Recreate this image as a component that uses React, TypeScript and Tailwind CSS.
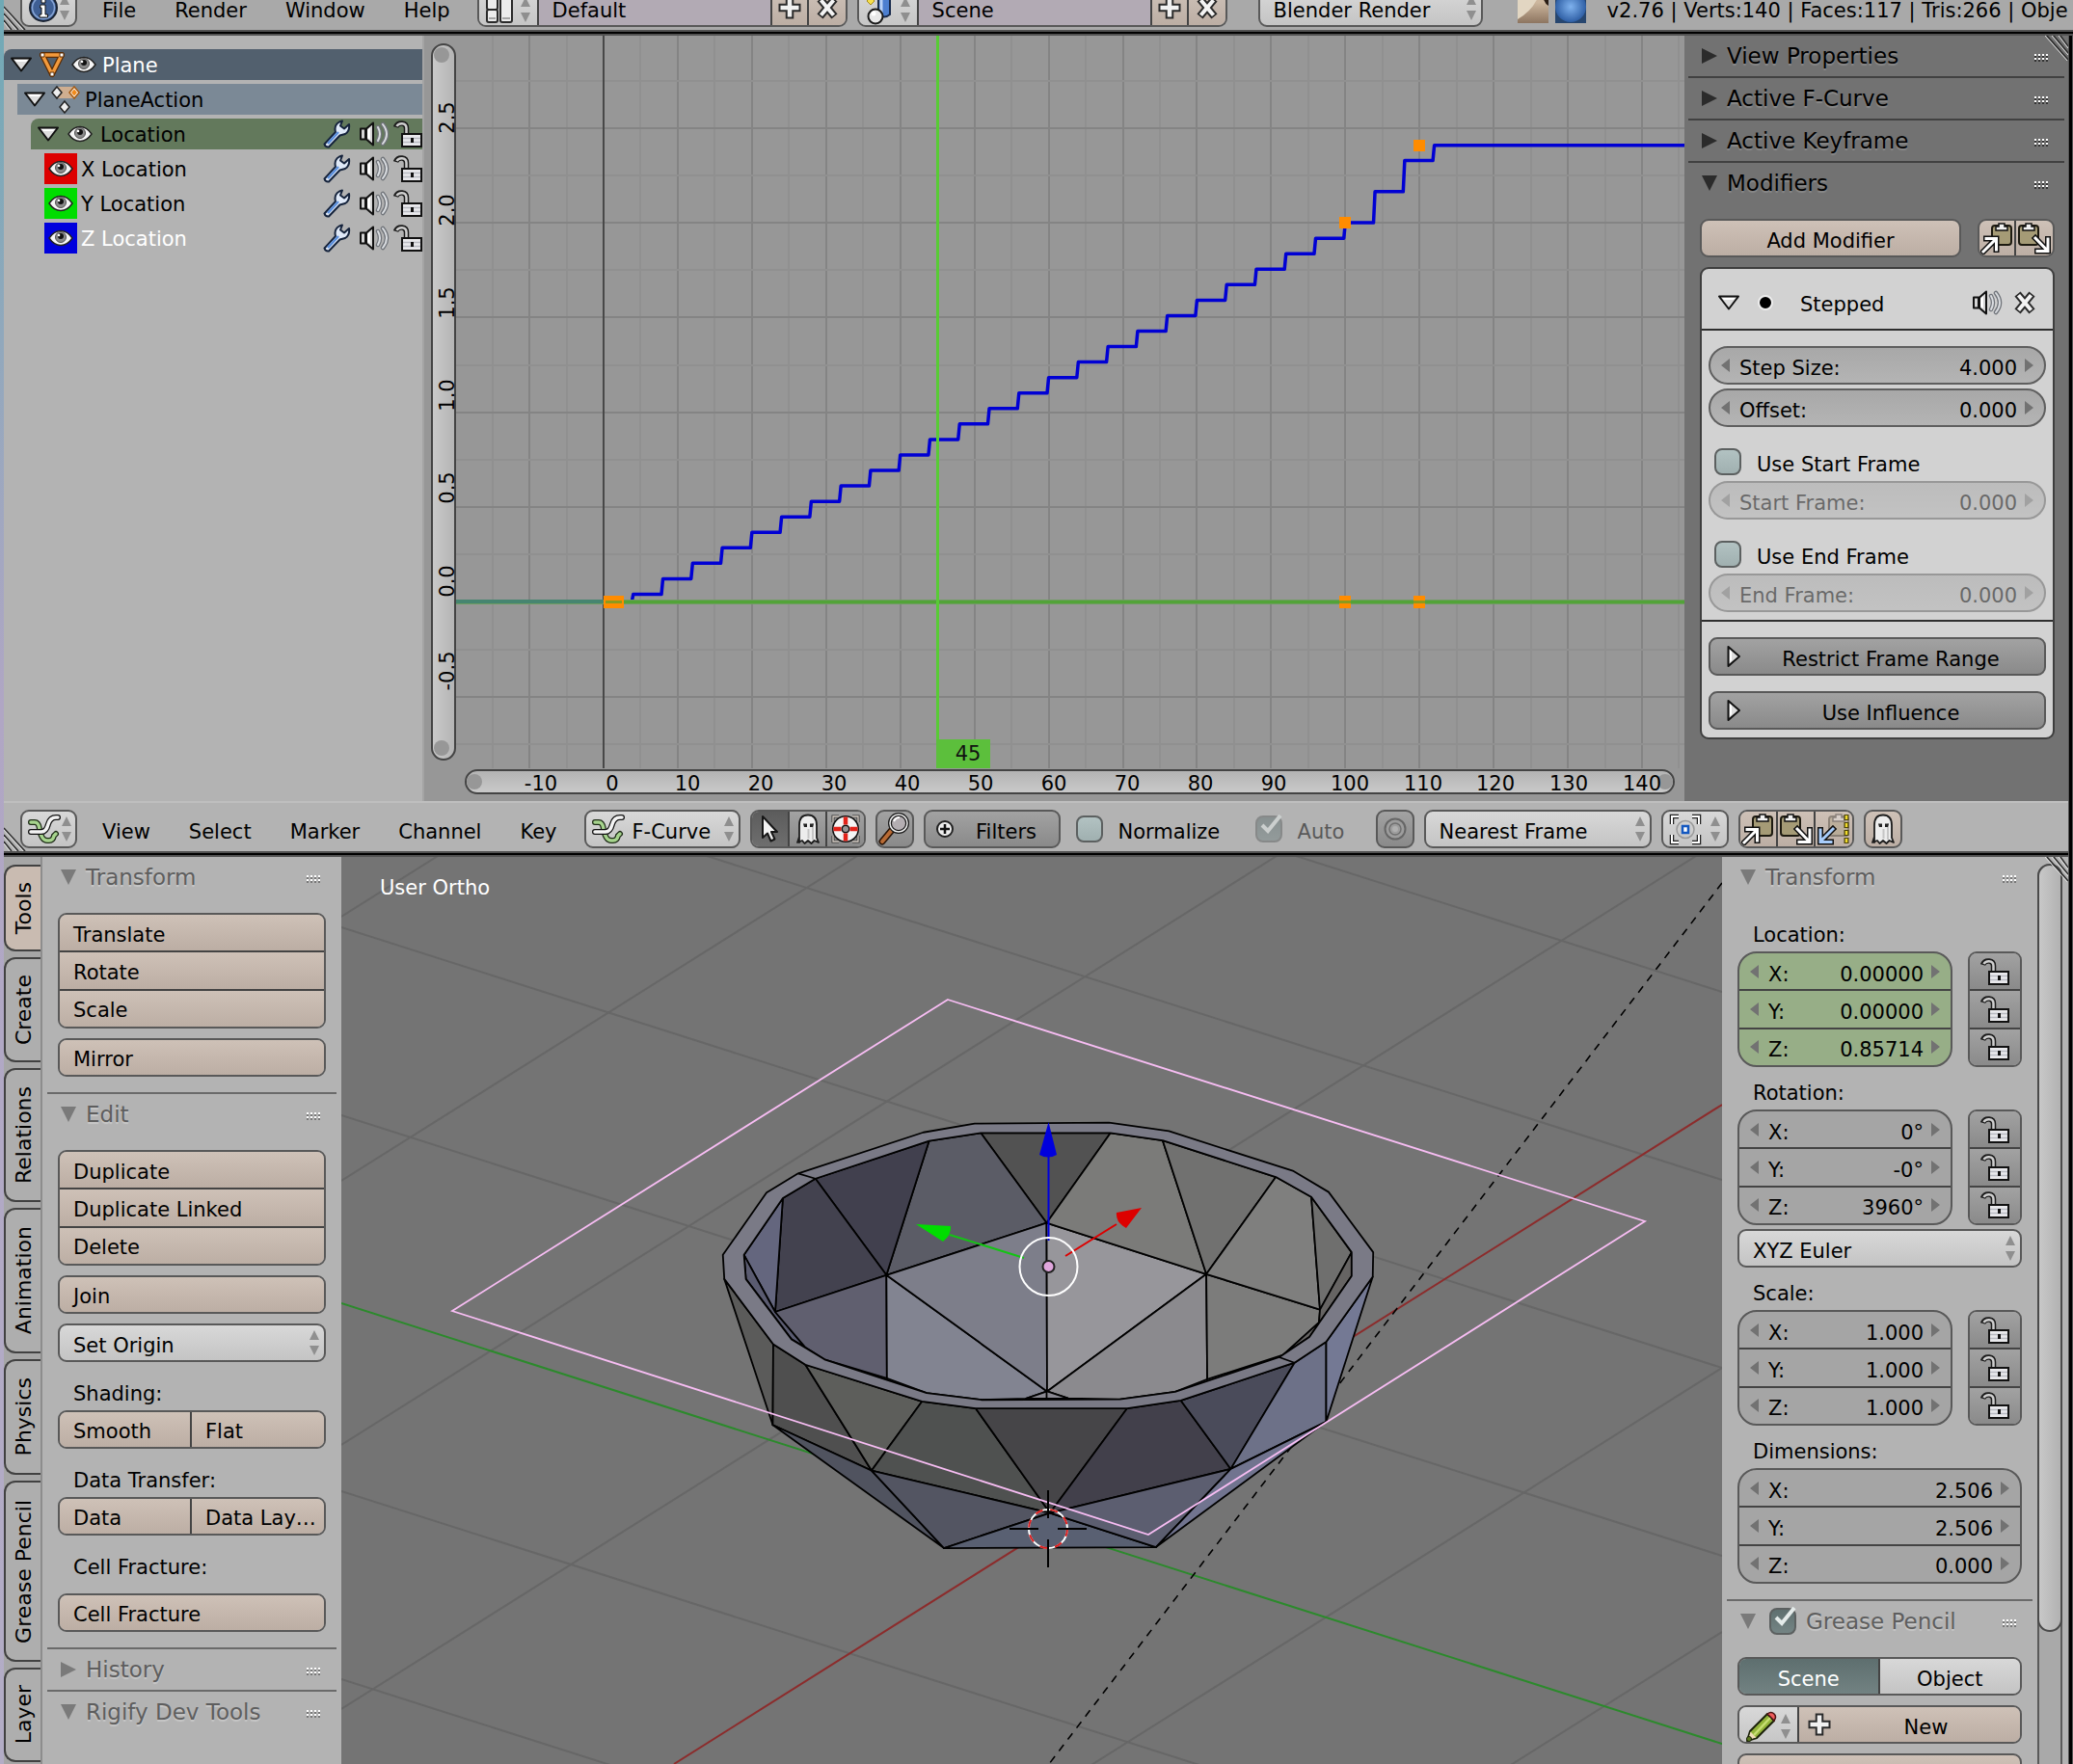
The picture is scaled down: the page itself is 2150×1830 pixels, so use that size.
import type { ReactNode } from "react";
import clsx from "clsx";

const TOOL = "bg-linear-to-b from-[#cec1b7] to-[#bcaea4]";
const MENU = "bg-linear-to-b from-[#d8d8d8] to-[#c4c4c4]";
const DARK = "bg-linear-to-b from-[#a2a2a2] to-[#8a8a8a]";
const FRAME = "rounded-[9px] border-2 border-[#595959]";

/* ---------- icons ---------- */

function Svg({ w = 32, h = 32, children }: { w?: number; h?: number; children: ReactNode }) {
  return (
    <svg width={w} height={h} viewBox={`0 0 ${w} ${h}`} className="shrink-0" aria-hidden="true">
      {children}
    </svg>
  );
}

function UpDown() {
  return (
    <Svg w={12} h={26}>
      <path d="M6 0 11 10H1ZM6 26 11 16H1Z" fill="#8f8f8f" />
    </Svg>
  );
}

function Disclosure() {
  return (
    <Svg w={24} h={18}>
      <path d="M2 2.500H22L12 15.500Z" fill="#ddd" stroke="#111" strokeWidth="2" strokeLinejoin="round" />
      <path d="M5 4H19L17 6H7Z" fill="#fff" />
    </Svg>
  );
}

function DisclosureRight() {
  return (
    <Svg w={16} h={24}>
      <path d="M2.500 2V22L14 12Z" fill="#ddd" stroke="#111" strokeWidth="2" strokeLinejoin="round" />
      <path d="M4 5V18L6 16V7Z" fill="#fff" />
    </Svg>
  );
}

function Eye() {
  return (
    <Svg w={26} h={18}>
      <path d="M1 9Q6 1.500 13 1.500T25 9Q20 16.500 13 16.500T1 9Z" fill="#f6f6f6" stroke="#222" strokeWidth="1.500" />
      <circle cx="13" cy="8" r="5.500" fill="#8a8a8a" stroke="#555" />
      <circle cx="13" cy="7" r="3" fill="#111" />
      <circle cx="11" cy="6" r="1.300" fill="#fff" />
    </Svg>
  );
}

function MeshTriangle() {
  return (
    <Svg w={28} h={28}>
      <path d="M4 4H24L14 24Z" fill="none" stroke="#5a2c05" strokeWidth="6" strokeLinejoin="round" />
      <path d="M4 4H24L14 24Z" fill="none" stroke="#f39a3c" strokeWidth="3.500" strokeLinejoin="round" />
      <path d="M2 2h4v4H2zM22 2h4v4h-4zM12 22h4v4h-4z" fill="#fff" stroke="#5a2c05" />
    </Svg>
  );
}

function ActionIcon() {
  return (
    <Svg w={32} h={30}>
      <path d="M7 2H25V14H7Z" fill="#cfae90" />
      <path d="M7 2 12 8 7 14 2 8Z" fill="#eee" stroke="#222" strokeWidth="1.500" />
      <path d="M25 2 30 8 25 14 20 8Z" fill="#fff" stroke="#a65b12" strokeWidth="1.500" />
      <path d="M25 4.500 28 8 25 11.500 22 8Z" fill="#f08a1c" />
      <path d="M15 17 20 23 15 29 10 23Z" fill="#eee" stroke="#222" strokeWidth="1.500" />
    </Svg>
  );
}

function Wrench() {
  return (
    <Svg w={30} h={30}>
      <path
        d="M2.500 25.500 14 13Q12 6 18 2.500L21 1.500 19 6.500 23 9.500 28 5Q29 12 24 15L18.500 16.500 7 28.500Q3.500 29 2.500 25.500Z"
        fill="#dfe9f8"
        stroke="#15233c"
        strokeWidth="2"
        strokeLinejoin="round"
      />
      <path d="M6 25 17 13" stroke="#5b8fdc" strokeWidth="2.500" />
    </Svg>
  );
}

function Speaker() {
  return (
    <Svg w={32} h={26}>
      <path d="M2 7.500H7V18.500H2ZM8 7.500 15 1.500V24.500L8 18.500Z" fill="#d5d5d5" stroke="#111" strokeWidth="2" strokeLinejoin="round" />
      <path d="M9 9 12 6V19L9 17Z" fill="#fff" />
      <path d="M20 6Q24 13 20 20M25 3Q33 13 25 23" fill="none" stroke="#70747a" strokeWidth="4.500" strokeLinecap="round" />
      <path d="M20 6Q24 13 20 20M25 3Q33 13 25 23" fill="none" stroke="#d9dce0" strokeWidth="2" strokeLinecap="round" />
    </Svg>
  );
}

function Lock() {
  return (
    <Svg w={30} h={28}>
      <path d="M2.500 7Q4 2.500 9 3 13.500 3.500 13.500 8V14" fill="none" stroke="#1c1c1c" strokeWidth="5.500" />
      <path d="M3.500 6Q5 3 9 3.200 13.500 3.500 13.500 8V14" fill="none" stroke="#cfcfcf" strokeWidth="2.500" />
      <path d="M9 14H29V27H9Z" fill="#e9e9ec" stroke="#111" strokeWidth="2" />
      <path d="M10 18.500H28M10 22.500H28" stroke="#b9bbc2" strokeWidth="1.500" />
      <path d="M18 18h3v5h-3z" fill="#111" />
    </Svg>
  );
}

function Cross() {
  return (
    <Svg w={26} h={26}>
      <path d="M5.500 4 20.500 22M20.500 4 5.500 22" stroke="#2a2a2a" strokeWidth="8" />
      <path d="M6.500 5.200 19.500 20.800M19.500 5.200 6.500 20.800" stroke="#f4f4f4" strokeWidth="4" />
    </Svg>
  );
}

function Plus() {
  return (
    <Svg w={26} h={26}>
      <path d="M13 1.500V24.500M1.500 13H24.500" stroke="#2a2a2a" strokeWidth="8.500" />
      <path d="M13 3.500V22.500M3.500 13H22.500" stroke="#f1f1f1" strokeWidth="4.500" />
    </Svg>
  );
}

function InfoIcon() {
  return (
    <Svg w={32} h={34}>
      <circle cx="16" cy="17" r="14" fill="#3f5f94" stroke="#1b2433" strokeWidth="2" />
      <circle cx="16" cy="17" r="11.500" fill="none" stroke="#88a6d6" strokeWidth="1.500" />
      <path d="M13 14H18V24H20.500V27H12V24H14V17H12.500ZM14 8H18V12H14Z" fill="#fff" stroke="#111" strokeWidth="1" />
    </Svg>
  );
}

function CurveIcon() {
  return (
    <Svg w={34} h={34}>
      <g fill="none" strokeLinecap="round">
        <path d="M3 10H7Q11 10 12 17 14 29 20 29H22Q26 29 27 24L29 22" stroke="#1d2b16" strokeWidth="6" />
        <path d="M3 10H7Q11 10 12 17 14 29 20 29H22Q26 29 27 24L29 22" stroke="#a6d48d" strokeWidth="3.500" />
        <path d="M3 20H14Q19 20 21 12 23 5 29 5H31" stroke="#111" strokeWidth="6" />
        <path d="M3 20H14Q19 20 21 12 23 5 29 5H31" stroke="#f4f4f4" strokeWidth="3.500" />
      </g>
    </Svg>
  );
}

function ScreenLayout() {
  return (
    <Svg w={30} h={30}>
      <g fill="#ececec" stroke="#2a2a2a" strokeWidth="2">
        <rect x="2" y="1" width="11" height="14" rx="2" />
        <rect x="2" y="15" width="11" height="13" rx="2" />
        <rect x="16" y="1" width="12" height="27" rx="2" />
      </g>
      <path d="M4 24H11M18 24H26" stroke="#a5a5a5" strokeWidth="2" />
    </Svg>
  );
}

function SceneIcon() {
  return (
    <Svg w={32} h={34}>
      <path d="M2 8 6 4 10 8 6 12Z" fill="#f5df4d" stroke="#a58a1c" />
      <path d="M14 2H26V22Q20 27 14 22Z" fill="#4c7fd0" stroke="#182a4c" strokeWidth="2" />
      <path d="M17 4V21" stroke="#b9d2f6" strokeWidth="3" />
      <circle cx="11" cy="24" r="7.500" fill="#e8e8e8" stroke="#1a1a1a" strokeWidth="2" />
      <circle cx="9" cy="21" r="2.500" fill="#fff" />
    </Svg>
  );
}

function Pointer() {
  return (
    <Svg w={22} h={32}>
      <path
        d="M4 3V25L9 20.500 12.500 28.500 16.500 26.500 13 19H19Z"
        fill="#f2f2f2"
        stroke="#161616"
        strokeWidth="2"
        strokeLinejoin="round"
      />
    </Svg>
  );
}

function Ghost() {
  return (
    <Svg w={26} h={32}>
      <path
        d="M4 30V12Q4 1.500 13 1.500T22 12V25L24 30 19.500 28 16.500 31 13 28 9.500 31 7 28 2 30 4 24Z"
        fill="#ededed"
        stroke="#1c1c1c"
        strokeWidth="1.800"
        strokeLinejoin="round"
      />
      <path d="M18 10V27M13.500 16V26" stroke="#c6c6c6" strokeWidth="2" />
      <path d="M8 10.500H12V14H9ZM15 10.500H19L18 14H15Z" fill="#222" />
    </Svg>
  );
}

function Lifebuoy() {
  return (
    <Svg w={32} h={32}>
      <path d="M3 9V3H9M23 3H29V9M29 23V29H23M9 29H3V23" fill="none" stroke="#333" strokeWidth="3" />
      <path d="M3 9V3H9M23 3H29V9M29 23V29H23M9 29H3V23" fill="none" stroke="#d8d0c8" strokeWidth="1.300" />
      <circle cx="16" cy="16" r="8.500" fill="none" stroke="#111" strokeWidth="11" />
      <circle cx="16" cy="16" r="8.500" fill="none" stroke="#f4f4f4" strokeWidth="8" />
      <path d="M16 3.500V11.500M16 20.500V28.500M3.500 16H11.500M20.500 16H28.500" stroke="#e2231a" strokeWidth="4.500" />
    </Svg>
  );
}

function Magnifier() {
  return (
    <Svg w={34} h={34}>
      <path d="M4 30 14 18" stroke="#2a1507" strokeWidth="7" strokeLinecap="round" />
      <path d="M4 30 14 18" stroke="#b86b35" strokeWidth="4" strokeLinecap="round" />
      <circle cx="21" cy="11" r="9" fill="#b4aeb2" stroke="#1a1a1a" strokeWidth="4" />
      <circle cx="21" cy="11" r="9" fill="none" stroke="#eee" strokeWidth="1.500" />
      <path d="M16 9Q18 5 22 5" stroke="#fff" strokeWidth="2" fill="none" />
    </Svg>
  );
}

function PlusBadge() {
  return (
    <Svg w={20} h={20}>
      <circle cx="10" cy="10" r="8" fill="#eee" stroke="#222" strokeWidth="2" />
      <path d="M10 5V15M5 10H15" stroke="#111" strokeWidth="2.500" />
    </Svg>
  );
}

function PivotIcon() {
  const corner = "M3 11V3H10M24 3H31V11M31 22V30H24M10 30H3V22";
  return (
    <Svg w={34} h={33}>
      <path d={corner} fill="none" stroke="#222" strokeWidth="4.500" />
      <path d={corner} fill="none" stroke="#fff" strokeWidth="2" />
      <circle cx="17" cy="16.500" r="9" fill="none" stroke="#999" strokeWidth="1.500" />
      <rect x="14" y="13" width="6" height="7" fill="#fff" stroke="#1458c0" strokeWidth="2.500" />
    </Svg>
  );
}

function Clipboard({ kind }: { kind: "copy" | "paste" | "bake" }) {
  const x = kind === "paste" ? 0 : 11;
  const arrow =
    kind === "copy" ? "M3 31 15 19M6 17.500H16.500V29" : kind === "paste" ? "M18 17 30 29.500M31 18V30.500H20" : "M16 17 4 29M3 18V30.500H14";
  return (
    <Svg w={34} h={34}>
      <g opacity={kind === "bake" ? 0.35 : 1}>
        <rect x={x + 1} y="4" width="20" height="20" rx="3" fill="#a59b76" stroke="#1d1a10" strokeWidth="2" />
        <path d={`M${x + 5} 9V5H${x + 8}V2H${x + 14}V5H${x + 17}V9Z`} fill="#f1f1f1" stroke="#111" strokeWidth="1.500" />
      </g>
      {kind === "bake" && (
        <>
          <path d="M30 2V33" stroke="#4b4308" strokeWidth="5" strokeDasharray="6 2" />
          <path d="M30 3V33" stroke="#f2dc2c" strokeWidth="2.500" strokeDasharray="4 4" />
        </>
      )}
      <path d={arrow} fill="none" stroke="#111" strokeWidth="6" strokeLinecap="square" />
      <path d={arrow} fill="none" stroke={kind === "bake" ? "#a8cdfb" : "#fff"} strokeWidth="3" strokeLinecap="square" />
    </Svg>
  );
}

function Pencil() {
  return (
    <Svg w={34} h={34}>
      <path d="M2 32 5 22 23 4 30 11 12 29Z" fill="#93b43a" stroke="#1b210a" strokeWidth="2" strokeLinejoin="round" />
      <path d="M3 31 5.500 22.500 11.500 28.500Z" fill="#efdcb8" />
      <path d="M9 26 26 8" stroke="#c7dd73" strokeWidth="2.500" />
      <path d="M23 4Q27 1 30 4T30 11Z" fill="#ee5b5b" stroke="#4d1414" strokeWidth="1.500" />
      <circle cx="4" cy="30" r="2.500" fill="#5b7a1d" stroke="#1b210a" />
    </Svg>
  );
}

function Grip({ dark }: { dark?: boolean }) {
  return (
    <Svg w={15} h={8}>
      {[0, 4, 8, 12].map((x) => (
        <g key={x}>
          <path d={`M${x} 2h2v2h-2zM${x} 6h2v2h-2z`} fill={dark ? "#333" : "#777"} />
          <path d={`M${x} 0h2v2h-2zM${x} 4h2v2h-2z`} fill="#fff" />
        </g>
      ))}
    </Svg>
  );
}

function CornerHatch({ flip }: { flip?: boolean }) {
  return (
    <svg width="24" height="26" className={clsx("absolute", flip ? "right-0 top-0" : "bottom-0 left-0")} aria-hidden="true">
      {[0, 7, 14].map((o) => (
        <g key={o}>
          <path d={flip ? `M${2 + o} 0 24 ${25 - o}` : `M0 ${2 + o} ${22 - o} 26`} stroke="#2e2e2e" strokeWidth="1.500" />
          <path d={flip ? `M${o} 0 24 ${27 - o}` : `M0 ${4 + o} ${20 - o} 26`} stroke="#e2e2e2" strokeWidth="1" />
        </g>
      ))}
    </svg>
  );
}

/* ---------- widgets ---------- */

function IconSelect({ label, icon, className }: { label: string; icon: ReactNode; className?: string }) {
  return (
    <div className={clsx("relative flex h-10 shrink-0 items-center justify-between px-1.5", MENU, className)}>
      {icon}
      <UpDown />
      <select aria-label={label} className="absolute inset-0 opacity-0" />
    </div>
  );
}

function MenuSelect({ label, value, icon, className }: { label: string; value: string; icon?: ReactNode; className?: string }) {
  return (
    <div className={clsx("relative flex h-10 shrink-0 items-center pl-1.5 pr-1", MENU, FRAME, className)}>
      {icon}
      <select aria-label={label} className="h-full w-full min-w-0 appearance-none pl-2 pt-1.5">
        <option>{value}</option>
      </select>
      <UpDown />
    </div>
  );
}

function ToolButton({ children }: { children: ReactNode }) {
  return <button className={clsx("min-h-0 flex-1 whitespace-nowrap pl-3.5 pt-1 text-left", TOOL)}>{children}</button>;
}

function ToolStack({ items }: { items: string[] }) {
  return (
    <div className={clsx("flex flex-col divide-y-2 divide-[#444] overflow-hidden", FRAME, items.length === 3 ? "h-[120px]" : "h-10")}>
      {items.map((item) => (
        <ToolButton key={item}>{item}</ToolButton>
      ))}
    </div>
  );
}

function ToolPair({ label, items }: { label: string; items: string[] }) {
  return (
    <div>
      <Caption>{label}</Caption>
      <div className={clsx("grid h-10 grid-cols-2 divide-x-2 divide-[#444] overflow-hidden", FRAME)}>
        {items.map((item) => (
          <ToolButton key={item}>{item}</ToolButton>
        ))}
      </div>
    </div>
  );
}

function Caption({ children }: { children: ReactNode }) {
  return <div className="flex h-10 items-center pl-4 pt-1.5">{children}</div>;
}

function NumberRow({ name, value }: { name: string; value: string }) {
  return (
    <div className="flex min-h-0 flex-1 items-center px-2.5">
      <button aria-label={`Decrease ${name}`}>
        <Svg w={12} h={14}>
          <path d="M10 0V14L1 7Z" fill="#727272" />
        </Svg>
      </button>
      <label className="flex min-w-0 flex-1 items-center pl-2 pr-1.5 pt-1.5">
        <span className="shrink-0">{name}</span>
        <input defaultValue={value} className="w-full min-w-0 text-right" />
      </label>
      <button aria-label={`Increase ${name}`}>
        <Svg w={12} h={14}>
          <path d="M2 0V14L11 7Z" fill="#727272" />
        </Svg>
      </button>
    </div>
  );
}

function VectorFields({ caption, values, keyed, locks = true }: { caption: string; values: string[]; keyed?: boolean; locks?: boolean }) {
  return (
    <div>
      <Caption>{caption}</Caption>
      <div className="flex gap-4">
        <div
          className={clsx(
            "flex h-[120px] min-w-0 flex-1 flex-col divide-y-2 divide-[#444] overflow-hidden rounded-[20px] border-2 border-[#595959]",
            keyed ? "bg-[#97ae87]" : "bg-[#a5a5a5]",
          )}
        >
          {["X:", "Y:", "Z:"].map((axis, i) => (
            <NumberRow key={axis} name={axis} value={values[i]} />
          ))}
        </div>
        {locks && (
          <div className={clsx("flex h-[120px] w-14 flex-col divide-y-2 divide-[#444] overflow-hidden", FRAME)}>
            {["X", "Y", "Z"].map((axis) => (
              <button key={axis} aria-label={`Lock ${caption} ${axis}`} className={clsx("flex min-h-0 flex-1 items-center justify-center", DARK)}>
                <Lock />
              </button>
            ))}
          </div>
        )}
      </div>
    </div>
  );
}

function SliderField({ name, value, disabled }: { name: string; value: string; disabled?: boolean }) {
  return (
    <div className={clsx("flex h-10 rounded-full border-2 border-[#5f5f5f] bg-linear-to-b from-[#a8a8a8] to-[#b4b4b4]", disabled && "opacity-50")}>
      <NumberRow name={name} value={value} />
    </div>
  );
}

function Check({ label, checked, disabled, bare }: { label: string; checked?: boolean; disabled?: boolean; bare?: boolean }) {
  return (
    <label className={clsx("flex shrink-0 items-center gap-4", disabled && "opacity-50", !bare && "h-10 pl-1.5")}>
      <span className="relative flex">
        <input
          type="checkbox"
          defaultChecked={checked}
          disabled={disabled}
          aria-label={label}
          className="size-7 appearance-none rounded-lg border-2 border-[#5c6060] bg-linear-to-b from-[#b2c2c2] to-[#a0b0b0] checked:from-[#5f7070] checked:to-[#748484]"
        />
        {checked && (
          <svg width="28" height="30" viewBox="0 0 28 30" className="pointer-events-none absolute -top-1 left-0" aria-hidden="true">
            <path d="M7 14 13 20 26 4" fill="none" stroke="#e4ebea" strokeWidth="4" />
          </svg>
        )}
      </span>
      {!bare && <span className="pt-1.5">{label}</span>}
    </label>
  );
}

function PanelHeader({ title, open, dark, first, check }: { title: string; open?: boolean; dark?: boolean; first?: boolean; check?: boolean }) {
  return (
    <div
      className={clsx(
        "flex shrink-0 items-center gap-2.5 pl-3.5 pr-4",
        first ? "h-[42px]" : "h-11 border-t-2",
        dark ? "border-[#414141] text-black" : "border-[#6a6a6a] text-[#5e5e5e]",
      )}
    >
      <Svg w={16} h={16}>
        <path d={open ? "M0 0H16L8 16Z" : "M0 0 16 8 0 16Z"} fill={dark ? "#2b2b2b" : "#7a7a7a"} />
      </Svg>
      {check && (
        <div className="pl-1">
          <Check label={title} checked bare />
        </div>
      )}
      <h2 className={clsx("flex-1 text-[23px] leading-6", dark ? "[text-shadow:0_2px_1px_#8a8a8a]" : "[text-shadow:0_2px_1px_#c8c8c8]")}>{title}</h2>
      <div className="pt-1">
        <Grip dark={dark} />
      </div>
    </div>
  );
}

function HeaderMenus({ items }: { items: string[] }) {
  return (
    <nav className="ml-1.5 flex shrink-0">
      {items.map((item) => (
        <button key={item} className="h-10 px-5 pt-1.5">
          {item}
        </button>
      ))}
    </nav>
  );
}

function DataBlock({ label, value, icon, className }: { label: string; value: string; icon: ReactNode; className: string }) {
  return (
    <div className={clsx("flex h-10 shrink-0 divide-x-2 divide-[#444] overflow-hidden", FRAME, className)}>
      <IconSelect label={label} icon={icon} className="w-[62px]" />
      <input defaultValue={value} aria-label={`${label} name`} className="h-full min-w-0 flex-1 bg-[#b2aab4] pl-3.5 pt-1.5" />
      <button aria-label={`Add ${label}`} className={clsx("flex w-[38px] items-center justify-center", TOOL)}>
        <Plus />
      </button>
      <button aria-label={`Remove ${label}`} className={clsx("flex w-[38px] items-center justify-center", TOOL)}>
        <Cross />
      </button>
    </div>
  );
}

function AreaEdge() {
  return <div className="h-1.5 shrink-0 border-y-2 border-[#525252] bg-black" />;
}

/* ---------- info header ---------- */

function InfoHeader() {
  return (
    <header className="relative flex h-[31px] shrink-0 items-end overflow-hidden whitespace-nowrap bg-[#a9a9a9] pb-[3px] pl-[17px]">
      <CornerHatch />
      <IconSelect label="Editor type" icon={<InfoIcon />} className={clsx("w-[59px]", FRAME)} />
      <HeaderMenus items={["File", "Render", "Window", "Help"]} />
      <DataBlock label="Screen" value="Default" icon={<ScreenLayout />} className="ml-2 w-[384px]" />
      <DataBlock label="Scene" value="Scene" icon={<SceneIcon />} className="ml-2.5 w-[384px]" />
      <MenuSelect label="Render engine" value="Blender Render" className="ml-8 w-[233px]" />
      <svg width="72" height="40" className="ml-9 shrink-0" aria-hidden="true">
        <defs>
          <linearGradient id="splash" x1="0" y1="0" x2="0" y2="1">
            <stop offset="0.4" stopColor="#cdb79e" />
            <stop offset="1" stopColor="#8d7560" />
          </linearGradient>
          <radialGradient id="ball">
            <stop offset="0" stopColor="#7fb2ee" />
            <stop offset="1" stopColor="#2f5fa5" />
          </radialGradient>
        </defs>
        <rect width="32" height="36" fill="url(#splash)" />
        <path d="M0 0H24Q20 20 0 32Z" fill="#e2d6c2" />
        <path d="M26 0H32V18Q25 14 26 0Z" fill="#2a1d15" />
        <rect x="39" width="32" height="36" fill="#27466f" />
        <circle cx="55" cy="19" r="16" fill="url(#ball)" />
      </svg>
      <p className="ml-[21px] flex h-10 shrink-0 items-center pt-1.5">v2.76 | Verts:140 | Faces:117 | Tris:266 | Obje</p>
    </header>
  );
}

/* ---------- graph editor ---------- */

const axisChannels = [
  { name: "X Location", color: "bg-[#dd0000]" },
  { name: "Y Location", color: "bg-[#00dd00]" },
  { name: "Z Location", color: "bg-[#0000dd]", selected: true },
];

function ChannelToggles() {
  return (
    <div className="ml-auto flex items-center gap-1">
      <button aria-label="Modifiers" className="pr-1">
        <Wrench />
      </button>
      <button aria-label="Mute">
        <Speaker />
      </button>
      <button aria-label="Protect">
        <Lock />
      </button>
    </div>
  );
}

function ChannelList() {
  return (
    <div className="flex w-[436px] shrink-0 flex-col gap-1 border-r-2 border-[#a4a4a4] bg-[#b3b3b3] pt-3.5">
      <div className="flex h-8 items-center gap-1.5 rounded-tl-lg bg-[#52606e] pl-1.5 text-white">
        <Disclosure />
        <MeshTriangle />
        <Eye />
        <span className="pt-0.5">Plane</span>
      </div>
      <div className="ml-3.5 flex h-8 items-center gap-1 bg-[#7b8996] pl-1.5">
        <Disclosure />
        <ActionIcon />
        <span className="pt-0.5">PlaneAction</span>
      </div>
      <div className="ml-7 flex h-8 items-center gap-2 rounded-tl-lg bg-[#63795c] pl-1.5">
        <Disclosure />
        <Eye />
        <span className="pt-0.5">Location</span>
        <ChannelToggles />
      </div>
      {axisChannels.map((ch) => (
        <div key={ch.name} className={clsx("ml-[42px] flex h-8 items-center gap-1", ch.selected && "text-white")}>
          <div className={clsx("flex h-8 w-[34px] items-center justify-center", ch.color)}>
            <Eye />
          </div>
          <span className="pt-0.5">{ch.name}</span>
          <ChannelToggles />
        </div>
      ))}
    </div>
  );
}

const fx = (frame: number) => 626 + frame * 7.693;
const fy = (value: number) => 624.5 - value * 196.7;

function steppedPath() {
  let d = `M${fx(2)} ${fy(0)}H${fx(3.8)}`;
  for (let f = 4; f <= 112; f += 4) {
    const v = f <= 100 ? ((f - 2) / 98) * 2 : Math.min(2 + (f - 100) * 0.041, 2.409);
    d += `L${fx(f)} ${fy(v)}H${f === 112 ? 1747 : fx(f + 3.8)}`;
  }
  return d;
}

const frameLabels = [561, 635, 713, 789, 865, 941, 1017, 1093, 1169, 1245, 1321, 1400, 1476, 1551, 1627, 1703];
const valueLabels = [
  ["2.5", 122],
  ["2.0", 218],
  ["1.5", 314],
  ["1.0", 410],
  ["0.5", 506],
  ["0.0", 603],
  ["-0.5", 696],
] as const;

function GraphPlot() {
  const frames = Array.from({ length: 33 }, (_, i) => i * 5 - 15);
  const values = Array.from({ length: 16 }, (_, i) => i * 0.25 - 0.75);
  return (
    <svg viewBox="440 37 1307 794" preserveAspectRatio="xMinYMin slice" className="h-full min-w-0 flex-1 bg-[#979797]" fontSize="21">
      <defs>
        <linearGradient id="vbar">
          <stop offset="0" stopColor="#cacaca" />
          <stop offset="1" stopColor="#b4b4b4" />
        </linearGradient>
        <linearGradient id="hbar" x2="0" y2="1">
          <stop offset="0" stopColor="#b2b2b2" />
          <stop offset="1" stopColor="#cacaca" />
        </linearGradient>
      </defs>
      {frames.map((f) => (
        <path key={f} d={`M${Math.round(fx(f))} 37V797`} stroke={f % 10 ? "#909090" : "#848484"} strokeWidth="2" />
      ))}
      {values.map((v) => (
        <path key={v} d={`M473 ${Math.round(fy(v))}H1747`} stroke={v % 0.5 ? "#909090" : "#848484"} strokeWidth="2" />
      ))}
      <path d="M626 37V797" stroke="#484848" strokeWidth="2" />
      <path d={steppedPath()} fill="none" stroke="#0000d4" strokeWidth="3.500" strokeLinejoin="round" />
      <path d="M473 624.500H1747" stroke="#6f9c62" strokeWidth="5" />
      <path d="M473 624.500H1747" stroke="#52a338" strokeWidth="3" />
      <path d="M473 624H626" stroke="#468570" strokeWidth="4" />
      <path d="M972.500 37V797" stroke="#58cb35" strokeWidth="3" />
      <g fill="#ff8c00">
        <path d="M626 618h21v13h-21z" />
        <path d="M1389 618h12v13h-12zM1466 618h12v13h-12zM1389 225h12v12h-12zM1466 145h12v12h-12z" />
      </g>
      <path d="M628 624.500H645M1389 624.500H1401M1466 624.500H1478" stroke="#8b9a1e" strokeWidth="3" />
      <path d="M971 767H1027V797H971Z" fill="#5cbf3c" />
      <text x="1004" y="789" textAnchor="middle" fill="#111">
        45
      </text>
      <rect x="448" y="46" width="24" height="742" rx="12" fill="url(#vbar)" stroke="#444" strokeWidth="2" />
      <circle cx="458" cy="57" r="8" fill="#979797" />
      <circle cx="458" cy="776" r="8" fill="#979797" />
      <rect x="483" y="799" width="1253" height="24" rx="12" fill="url(#hbar)" stroke="#444" strokeWidth="2" />
      <circle cx="492" cy="811" r="8" fill="#979797" />
      <circle cx="1727" cy="811" r="8" fill="#979797" />
      {valueLabels.map(([label, y]) => (
        <text key={label} transform={`translate(471 ${y}) rotate(-90)`} textAnchor="middle">
          {label}
        </text>
      ))}
      {frameLabels.map((x, i) => (
        <text key={x} x={x} y="820" textAnchor="middle">
          {i * 10 - 10}
        </text>
      ))}
    </svg>
  );
}

function ModifierPanel() {
  return (
    <div className="pl-3 pr-2.5 pt-4">
      <div className="flex gap-[17px]">
        <button className={clsx("h-10 flex-1 pt-1.5", TOOL, FRAME)}>Add Modifier</button>
        <div className={clsx("flex h-10 divide-x-2 divide-[#444] overflow-hidden", FRAME)}>
          <button aria-label="Copy modifiers" className={clsx("flex w-[38px] items-center justify-center", TOOL)}>
            <Clipboard kind="copy" />
          </button>
          <button aria-label="Paste modifiers" className={clsx("flex w-[38px] items-center justify-center", TOOL)}>
            <Clipboard kind="paste" />
          </button>
        </div>
      </div>
      <div className="mt-2.5 rounded-[9px] border-2 border-[#3e3e3e] bg-[#d2d2d2]">
        <div className="flex h-16 items-center border-b-2 border-[#2e2e2e] px-4 pt-2">
          <button aria-label="Collapse modifier">
            <Disclosure />
          </button>
          <input
            type="radio"
            defaultChecked
            aria-label="Active modifier"
            className="ml-[18px] size-4 appearance-none rounded-full border-2 border-[#eee] bg-black"
          />
          <input defaultValue="Stepped" aria-label="Modifier name" className="ml-7 min-w-0 flex-1 pt-1" />
          <button aria-label="Mute modifier">
            <Speaker />
          </button>
          <button aria-label="Delete modifier" className="ml-2.5">
            <Cross />
          </button>
        </div>
        <div className="flex flex-col border-b-2 border-[#2e2e2e] px-[7px] pb-2 pt-4">
          <SliderField name="Step Size:" value="4.000" />
          <div className="mt-1">
            <SliderField name="Offset:" value="0.000" />
          </div>
          <div className="mt-4">
            <Check label="Use Start Frame" />
            <SliderField name="Start Frame:" value="0.000" disabled />
          </div>
          <div className="mt-4">
            <Check label="Use End Frame" />
            <SliderField name="End Frame:" value="0.000" disabled />
          </div>
        </div>
        <div className="flex flex-col gap-4 px-[7px] pb-2 pt-4">
          {["Restrict Frame Range", "Use Influence"].map((item) => (
            <button key={item} className={clsx("flex h-10 items-center pl-4 pr-1", DARK, FRAME)}>
              <DisclosureRight />
              <span className="flex-1 pt-1.5">{item}</span>
            </button>
          ))}
        </div>
      </div>
    </div>
  );
}

function GraphHeader() {
  return (
    <div className="relative flex h-[52px] shrink-0 items-end whitespace-nowrap border-t-2 border-[#bfbfbf] bg-[#b3b3b3] pb-[3px] pl-[17px]">
      <CornerHatch />
      <IconSelect label="Editor type" icon={<CurveIcon />} className={clsx("w-[59px]", FRAME)} />
      <HeaderMenus items={["View", "Select", "Marker", "Channel", "Key"]} />
      <div className="ml-2 flex gap-2.5">
        <MenuSelect label="Mode" value="F-Curve" icon={<CurveIcon />} className="w-[162px]" />
        <div className={clsx("flex h-10 w-[120px] divide-x-2 divide-[#444] overflow-hidden", FRAME)}>
          <button aria-label="Only selected" className="flex flex-1 items-center justify-center bg-linear-to-b from-[#5c5c5c] to-[#6e6e6e]">
            <Pointer />
          </button>
          <button aria-label="Show hidden" className={clsx("flex flex-1 items-center justify-center", DARK)}>
            <Ghost />
          </button>
          <button aria-label="Show errors" className={clsx("flex flex-1 items-center justify-center", DARK)}>
            <Lifebuoy />
          </button>
        </div>
        <button aria-label="Search" className={clsx("flex h-10 w-10 items-center justify-center", DARK, FRAME)}>
          <Magnifier />
        </button>
        <button className={clsx("flex h-10 w-[142px] items-center pl-2.5", DARK, FRAME)}>
          <PlusBadge />
          <span className="flex-1 pt-1.5">Filters</span>
        </button>
        <div className="w-[182px]">
          <Check label="Normalize" />
        </div>
        <div className="w-[121px] -ml-1.5">
          <Check label="Auto" checked disabled />
        </div>
        <button aria-label="Proportional editing" className={clsx("flex h-10 w-10 items-center justify-center", DARK, FRAME)}>
          <Svg w={26} h={26}>
            <circle cx="13" cy="13" r="10.500" fill="#9d9d9d" stroke="#666" strokeWidth="2" />
            <circle cx="13" cy="13" r="6" fill="none" stroke="#707070" strokeWidth="1.500" />
            <circle cx="13" cy="13" r="3" fill="#b0b0b0" />
          </Svg>
        </button>
        <MenuSelect label="Auto snap" value="Nearest Frame" className="w-[236px]" />
        <IconSelect label="Pivot" icon={<PivotIcon />} className={clsx("w-[70px]", FRAME)} />
        <div className={clsx("flex h-10 w-[120px] divide-x-2 divide-[#444] overflow-hidden", FRAME)}>
          {(["copy", "paste", "bake"] as const).map((kind) => (
            <button key={kind} aria-label={`${kind} keyframes`} className={clsx("flex flex-1 items-center justify-center", TOOL)}>
              <Clipboard kind={kind} />
            </button>
          ))}
        </div>
        <button aria-label="Ghost curves" className={clsx("flex h-10 w-10 items-center justify-center", TOOL, FRAME)}>
          <Ghost />
        </button>
      </div>
    </div>
  );
}

/* ---------- 3d view ---------- */

const toolTabs = [
  { name: "Tools", height: "h-[90px]", active: true },
  { name: "Create", height: "h-[109px]" },
  { name: "Relations", height: "h-[139px]" },
  { name: "Animation", height: "h-[151px]" },
  { name: "Physics", height: "h-[120px]" },
  { name: "Grease Pencil", height: "h-[188px]" },
  { name: "Layer", height: "h-[98px]" },
];

function ToolShelf() {
  return (
    <>
      <div className="flex w-10 shrink-0 flex-col gap-1.5 border-r-2 border-[#8d8d8d] bg-[#a6a6a6] pt-2">
        {toolTabs.map((tab) => (
          <button
            key={tab.name}
            className={clsx(
              "flex shrink-0 items-center justify-center rounded-l-[12px] border-2 border-r-0 border-[#414141] pl-0.5 text-[22px] leading-6",
              tab.height,
              tab.active ? "bg-[#c9bbb1]" : "bg-[#aeaeae]",
            )}
          >
            <span className="rotate-180 [writing-mode:vertical-rl]">{tab.name}</span>
          </button>
        ))}
      </div>
      <div className="flex w-[310px] shrink-0 flex-col bg-[#b3b3b3] px-[5px]">
        <PanelHeader title="Transform" open first />
        <div className="flex flex-col gap-2.5 px-[11px] py-4">
          <ToolStack items={["Translate", "Rotate", "Scale"]} />
          <ToolStack items={["Mirror"]} />
        </div>
        <PanelHeader title="Edit" open />
        <div className="flex flex-col gap-2.5 px-[11px] py-4">
          <ToolStack items={["Duplicate", "Duplicate Linked", "Delete"]} />
          <ToolStack items={["Join"]} />
          <MenuSelect label="Origin" value="Set Origin" />
          <ToolPair label="Shading:" items={["Smooth", "Flat"]} />
          <ToolPair label="Data Transfer:" items={["Data", "Data Lay…"]} />
          <Caption>Cell Fracture:</Caption>
          <ToolStack items={["Cell Fracture"]} />
        </div>
        <PanelHeader title="History" />
        <PanelHeader title="Rigify Dev Tools" open />
      </div>
    </>
  );
}

const innerFaces = [
  ["638,164 908,164 775,440", "#525252"],
  ["530,188 638,164 775,440 441,600", "#5b5c66"],
  ["293,304 530,188 441,600", "#41404e"],
  ["225,364 293,304 441,600 209,713", "#43424f"],
  ["144,538 225,364 209,713", "#64667e"],
  ["144,538 209,713 272,822 243,797 148,612", "#5a5b70"],
  ["209,713 441,600 442,917 312,859 272,822", "#605f6f"],
  ["441,600 776,957 732,979 640,983 525,962 442,917", "#828491"],
  ["441,600 775,440 776,957", "#7d7e8a"],
  ["775,440 1108,597 776,957", "#97969b"],
  ["776,957 1108,597 1110,920 1043,958 928,981 820,978", "#8b8a8e"],
  ["776,957 820,978 732,979", "#8a8992"],
  ["1108,597 1345,706 1343,745 1268,845 1110,920", "#7c7c7b"],
  ["775,440 908,164 1017,187 1108,597", "#7b7b79"],
  ["1017,187 1253,299 1108,597", "#717170"],
  ["1253,299 1327,360 1345,706 1108,597", "#7f7f7e"],
  ["1327,360 1411,530 1345,706", "#6f6f6e"],
  ["1411,530 1411,603 1323,790 1268,845 1343,745 1345,706", "#666463"],
];

const outerFaces = [
  ["103,612 205,812 204,1060", "#5b5b5a"],
  ["205,812 272,875 410,1200 204,1060", "#4f4f4f"],
  ["272,875 515,988 410,1200", "#5d5e5b"],
  ["515,988 627,1009 782,1330 410,1200", "#4f5150"],
  ["627,1009 943,1009 782,1330", "#464548"],
  ["943,1009 1055,985 1159,1195 782,1330", "#42404b"],
  ["1055,985 1292,869 1159,1195", "#4a4b5a"],
  ["1292,869 1358,805 1358,1050 1159,1195", "#6d7188"],
  ["1358,805 1455,605 1358,1050", "#747994"],
  ["204,1060 410,1200 561,1438", "#50535f"],
  ["410,1200 782,1330 561,1438", "#535562"],
  ["561,1438 782,1330 1003,1435", "#596072"],
  ["782,1330 1159,1195 1003,1435", "#5c5e70"],
  ["1159,1195 1358,1050 1003,1435", "#71748f"],
];

const rim =
  "M625 135 905 132 1030 158 1290 281 1363 345 1456 530 1455 605 1358 805 1292 869 1055 985 943 1009 627 1009 515 988 272 875 205 812 103 612 100 538 191 347 257 288 518 162Z" +
  "M638 164 908 164 1017 187 1253 299 1327 360 1411 530 1411 603 1323 790 1260 852 1043 958 928 981 640 983 525 962 312 859 243 797 148 612 144 538 225 364 293 304 530 188Z";

function Viewport() {
  return (
    <svg viewBox="354 889 1432 941" preserveAspectRatio="xMinYMin slice" className="h-full min-w-0 flex-1 bg-[#747474]" fontSize="21">
      <g stroke="#676767" strokeWidth="2">
        {[572, 767, 962, 1157, 1547, 1742].map((y) => (
          <path key={y} d={`M354 ${y} 1786 ${y + 457}`} />
        ))}
        {[951, 1225, 1499, 1773, 2321, 2595].map((y) => (
          <path key={y} d={`M354 ${y} 1786 ${y - 902}`} />
        ))}
      </g>
      <path d="M354 1352 1786 1809" stroke="#2c8a2c" strokeWidth="2" />
      <path d="M699 1830 1786 1146" stroke="#8c2c2c" strokeWidth="2" />
      <path d="M1786 916 1088 1830" stroke="#000" strokeWidth="1.600" strokeDasharray="8 7" />
      <g transform="translate(700 1120) scale(.4974 .338)" stroke="#000" strokeWidth="1.800" strokeLinejoin="round">
        {[...innerFaces, ...outerFaces].map(([points, fill]) => (
          <polygon key={points} points={points} fill={fill} vectorEffect="non-scaling-stroke" />
        ))}
        <path d={rim} fill="#7a7a86" fillRule="evenodd" vectorEffect="non-scaling-stroke" />
        <path d="M257 288 293 304M1260 852 1292 869M775 957V981" vectorEffect="non-scaling-stroke" />
      </g>
      <path d="M983 1037 1706 1267 1191 1592 469 1360Z" fill="none" stroke="#f7bdf3" strokeWidth="1.800" />
      <g strokeWidth="2">
        <path d="M1087.500 1287V1198" stroke="#0000dd" />
        <path d="M1087.500 1164 1096 1198Q1087 1203 1078 1198Z" fill="#0000dd" />
        <path d="M1062 1305 985 1281" stroke="#14c414" />
        <path d="M950 1270 986 1272Q987 1281 978 1288Z" fill="#00dd00" />
        <path d="M1105 1303 1158 1270" stroke="#dd0000" />
        <path d="M1184 1253 1168 1274Q1157 1268 1158 1258Z" fill="#dd0000" />
        <circle cx="1087.500" cy="1314" r="30" fill="none" stroke="#fff" />
        <circle cx="1087.500" cy="1314" r="6" fill="#e0a6de" stroke="#222" />
        <circle cx="1087" cy="1586" r="20" fill="none" stroke="#fff" />
        <circle cx="1087" cy="1586" r="20" fill="none" stroke="#dd2020" strokeDasharray="8 8" />
        <path d="M1087 1546V1575M1087 1597V1626M1047 1586H1077M1097 1586H1127" stroke="#000" />
      </g>
      <text x="394" y="928" fill="#fff">
        User Ortho
      </text>
    </svg>
  );
}

function PropertiesShelf() {
  return (
    <div className="relative flex w-[359px] shrink-0 bg-[#b3b3b3] pr-1.5">
      <div className="flex min-w-0 flex-1 flex-col px-[5px]">
        <PanelHeader title="Transform" open first />
        <div className="flex shrink-0 flex-col gap-1 px-[11px] py-4">
          <VectorFields caption="Location:" values={["0.00000", "0.00000", "0.85714"]} keyed />
          <VectorFields caption="Rotation:" values={["0°", "-0°", "3960°"]} />
          <MenuSelect label="Rotation mode" value="XYZ Euler" />
          <VectorFields caption="Scale:" values={["1.000", "1.000", "1.000"]} />
          <VectorFields caption="Dimensions:" values={["2.506", "2.506", "0.000"]} locks={false} />
        </div>
        <PanelHeader title="Grease Pencil" open check />
        <div className="flex shrink-0 flex-col gap-2.5 px-[11px] py-4">
          <div className={clsx("grid h-10 grid-cols-2 divide-x-2 divide-[#444] overflow-hidden", FRAME)}>
            <button className="bg-linear-to-b from-[#5e6f6f] to-[#728282] pt-1.5 text-white">Scene</button>
            <button className={clsx("pt-1.5", MENU)}>Object</button>
          </div>
          <div className={clsx("flex h-10 divide-x-2 divide-[#444] overflow-hidden", FRAME)}>
            <IconSelect label="Grease pencil data" icon={<Pencil />} className="w-[62px]" />
            <button className={clsx("flex flex-1 items-center pl-2", TOOL)}>
              <Plus />
              <span className="flex-1 pt-1.5">New</span>
            </button>
          </div>
          <button aria-label="New layer" className={clsx("h-10", TOOL, FRAME)} />
        </div>
      </div>
      <div className="mt-[7px] w-[26px] shrink-0 rounded-t-full border-x-2 border-[#5a5a5a] bg-[#a9a9a9]">
        <div className="-mx-0.5 h-[797px] rounded-full border-2 border-[#4a4a4a] bg-linear-to-r from-[#c8c8c8] to-[#b2b2b2]" />
      </div>
      <CornerHatch flip />
    </div>
  );
}

export default function App() {
  return (
    <div className="flex h-screen overflow-hidden bg-[#b3b3b3] font-['DejaVu_Sans',sans-serif] text-[21px] leading-6 text-black">
      <div className="w-1 shrink-0 bg-linear-to-b from-[#6fa9b5] via-[#b0a6c4] via-40% to-[#b3adc6]" />
      <div className="flex min-w-0 flex-1 flex-col">
        <InfoHeader />
        <AreaEdge />
        <div className="flex min-h-0 flex-1">
          <main className="flex min-w-0 flex-1 flex-col">
            <section className="flex min-h-0 flex-[794]">
              <ChannelList />
              <GraphPlot />
              <aside className="relative w-[398px] shrink-0 bg-[#727272] px-1">
                <PanelHeader title="View Properties" dark first />
                <PanelHeader title="Active F-Curve" dark />
                <PanelHeader title="Active Keyframe" dark />
                <PanelHeader title="Modifiers" open dark />
                <ModifierPanel />
                <CornerHatch flip />
              </aside>
            </section>
            <GraphHeader />
            <AreaEdge />
            <section className="flex min-h-0 flex-[941] overflow-hidden">
              <ToolShelf />
              <Viewport />
              <PropertiesShelf />
            </section>
          </main>
          <div className="w-[5px] shrink-0 border-x border-[#555] bg-black" />
        </div>
      </div>
    </div>
  );
}
